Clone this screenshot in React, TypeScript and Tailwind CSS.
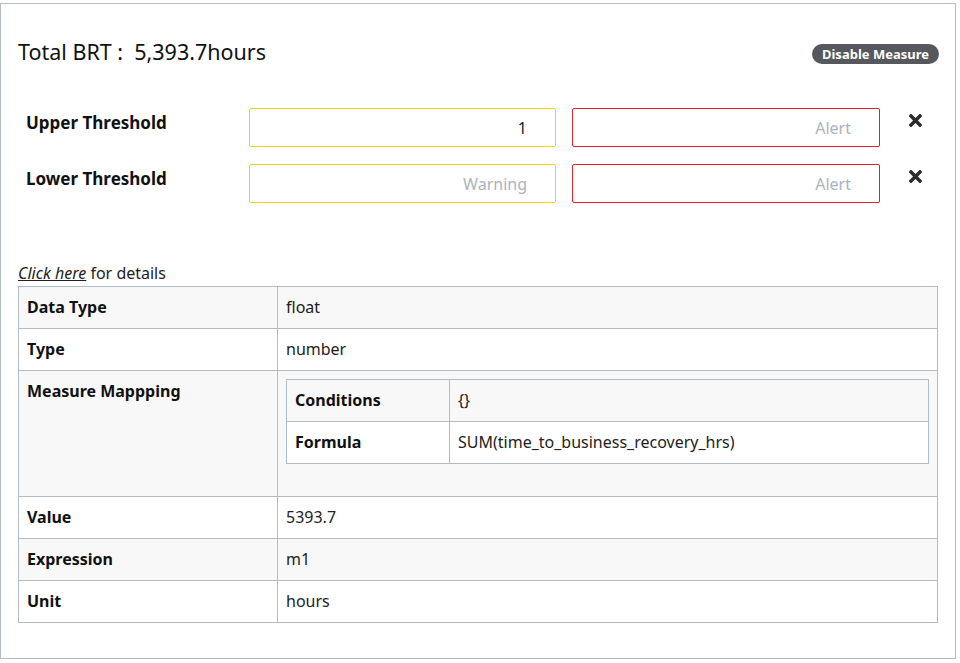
import React from "react";
import { FaTimes } from "react-icons/fa";

const font = { fontFamily: '"Noto Sans", "Open Sans", Arial, sans-serif' };

function Row({ label, value, gray, labelW = "w-[259px]", children }: { label: string; value?: string; gray?: boolean; labelW?: string; children?: React.ReactNode }) {
  return (
    <tr className={gray ? "bg-[#f8f8f8]" : "bg-white"}>
      <td className={`border border-[#b4bcc2] ${labelW} align-top px-2 pt-[10px] pb-[9px] h-[42px] font-bold text-[16px] text-[#111] leading-[21px]`}>{label}</td>
      <td className="border border-[#b4bcc2] align-top px-2 pt-[10px] pb-[9px] text-[16px] text-[#222] leading-[21px]">
        {children ?? value}
      </td>
    </tr>
  );
}

function ThresholdRow({ label, yellowVal, yellowPh }: { label: string; yellowVal?: string; yellowPh?: string }) {
  return (
    <div className="flex items-start h-[38px]">
      <div className="w-[231px] pl-[8px] pt-[5px] font-bold text-[17px] text-[#111] leading-[20px]">{label}</div>
      <div className="w-[307px] h-[39px] border border-[#f5d21a] rounded-[2px] flex items-center justify-end pr-[28px] text-[16px]">
        {yellowVal ? <span className="text-[#222]">{yellowVal}</span> : <span className="text-[#aab4bc]">{yellowPh}</span>}
      </div>
      <div className="ml-[16px] w-[308px] h-[39px] border border-[#e4202a] rounded-[2px] flex items-center justify-end pr-[28px] text-[16px]">
        <span className="text-[#aab4bc]">Alert</span>
      </div>
      <div className="ml-[26px] pt-[3px] text-[#2b2b2b]">
        <FaTimes size={19} />
      </div>
    </div>
  );
}

export default function App() {
  return (
    <div className="bg-white w-[960px] h-[663px] pt-[3px]" style={font}>
      <div className="w-[956px] h-[656px] border border-[#b4bcc2] px-[17px]">
        <div className="flex items-start justify-between pt-[34px] h-[75px]">
          <div className="text-[21.5px] text-[#111] leading-[28px]">Total BRT :&nbsp; 5,393.7hours</div>
          <div className="bg-[#55585c] text-white font-bold text-[13px] leading-[20px] h-[20px] px-[10px] rounded-full -mr-[1px] mt-[6px]">Disable Measure</div>
        </div>
        <div className="mt-[29px] flex flex-col gap-[18px]">
          <ThresholdRow label="Upper Threshold" yellowVal="1" />
          <ThresholdRow label="Lower Threshold" yellowPh="Warning" />
        </div>
        <div className="mt-[61px] text-[16px] text-[#222] leading-[20px]">
          <span className="italic underline">Click here</span> for details
        </div>
        <table className="w-[920px] border-collapse border border-[#b4bcc2] mt-[3px]">
          <tbody>
            <Row label="Data Type" value="float" gray />
            <Row label="Type" value="number" />
            <tr className="bg-[#f8f8f8]">
              <td className="border border-[#b4bcc2] w-[259px] align-top px-2 pt-[10px] font-bold text-[16px] text-[#111] leading-[21px]">Measure Mappping</td>
              <td className="border border-[#b4bcc2] align-top px-2 pt-[8px] pb-[32px]">
                <table className="w-full border-collapse border border-[#b4bcc2]">
                  <tbody>
                    <Row label="Conditions" value="{}" gray labelW="w-[163px]" />
                    <Row label="Formula" value="SUM(time_to_business_recovery_hrs)" labelW="w-[163px]" />
                  </tbody>
                </table>
              </td>
            </tr>
            <Row label="Value" value="5393.7" />
            <Row label="Expression" value="m1" gray />
            <Row label="Unit" value="hours" />
          </tbody>
        </table>
      </div>
    </div>
  );
}
